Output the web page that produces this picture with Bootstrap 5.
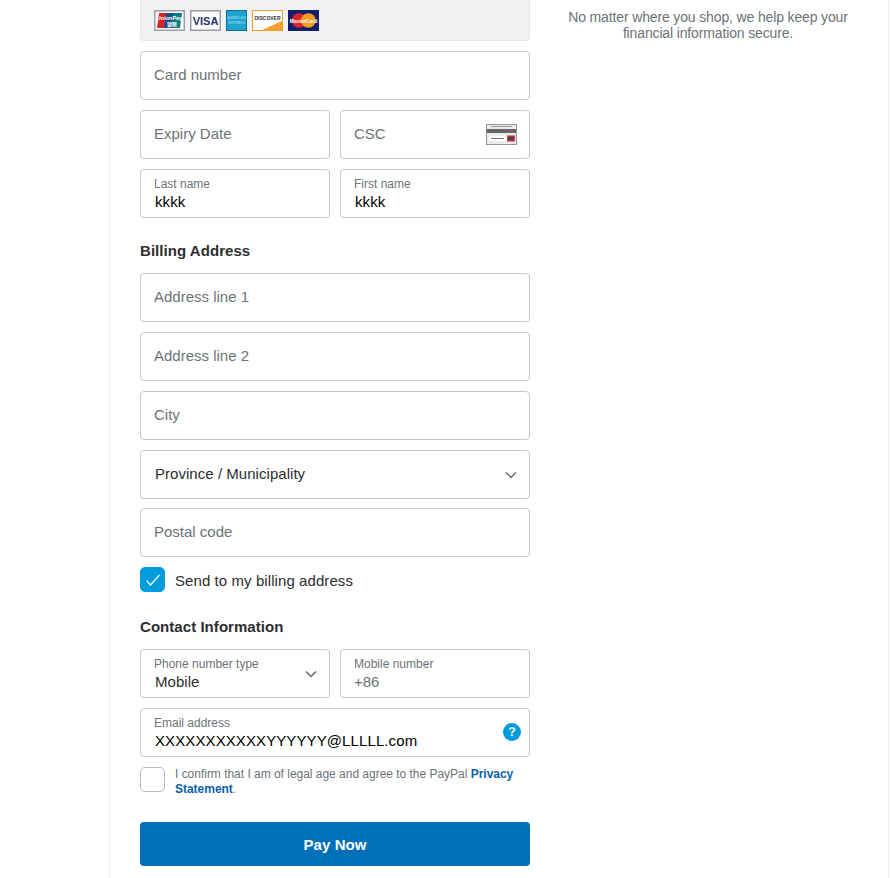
<!DOCTYPE html>
<html lang="en">
<head>
    <meta charset="UTF-8">
    <meta name="viewport" content="width=device-width, initial-scale=1.0">
    <title>Pay with card</title>
    <link href="https://cdn.jsdelivr.net/npm/bootstrap@5.3.0/dist/css/bootstrap.min.css" rel="stylesheet">
    <style>
        html, body {
            height: 878px;
            overflow: hidden;
        }
        body {
            background-color: #fff;
            color: #2c2e2f;
            font-family: "Liberation Sans", Arial, sans-serif;
            font-size: 15px;
        }
        .page-panel {
            width: 780px;
            height: 878px;
            margin-left: 109px;
            border-left: 1px solid #e9ebed;
            border-right: 1px solid #e9ebed;
        }
        .form-col {
            width: 390px;
            margin-left: 30px;
            flex: none;
        }
        .side-col {
            width: 290px;
            margin-left: 33px;
            padding-top: 9px;
            color: #6c7378;
            font-size: 14px;
            line-height: 16px;
            letter-spacing: -.14px;
        }
        .cards-box {
            height: 41px;
            background-color: #f1f2f4;
            border: 1px solid #e4e6e9;
            border-top: 0;
            border-radius: 0 0 4px 4px;
            padding: 10px 0 0 13px;
            margin-bottom: 10px;
            gap: 5px;
        }
        .field-box {
            position: relative;
            height: 49px;
            margin-bottom: 10px;
        }
        .half-w {
            width: 190px;
        }
        .field-box.tight-b {
            margin-bottom: 9px;
        }
        .pay-input.form-control, .pay-input.form-select {
            height: 49px;
            border: 1px solid #c3c8cd;
            border-radius: 4px;
            padding: 0 13px 2px;
            font-size: 15px;
            color: #000;
            box-shadow: none;
        }
        .pay-input::placeholder {
            color: #6c7378;
            opacity: 1;
        }
        .pay-input.form-control.has-label {
            padding: 16px 14px 0;
            letter-spacing: .1px;
        }
        .pay-input.form-control.has-label::placeholder {
            letter-spacing: 0;
        }
        .pay-input.form-control.plus-code {
            padding: 15px 13px 0;
        }
        .pay-input.form-select {
            padding: 0 30px 0 14px;
            color: #2c2e2f;
            letter-spacing: .04px;
            background-image: url("data:image/svg+xml,%3csvg xmlns='http://www.w3.org/2000/svg' viewBox='0 0 12 8'%3e%3cpath fill='none' stroke='%23555' stroke-width='1.2' d='M1 1.5l5 5 5-5'/%3e%3c/svg%3e");
            background-position: right 12px center;
            background-size: 12px 8px;
        }
        .pay-input.form-select.has-label {
            padding-top: 17px;
        }
        .float-text {
            position: absolute;
            left: 14px;
            top: 8px;
            z-index: 1;
            font-size: 12px;
            line-height: 14px;
            color: #6c7378;
            pointer-events: none;
        }
        .csc-icon {
            position: absolute;
            right: 13px;
            top: 14px;
        }
        .help-dot {
            position: absolute;
            right: 9px;
            top: 15px;
            width: 18px;
            height: 18px;
            border-radius: 50%;
            background-color: #009cde;
            color: #fff;
            font-size: 12px;
            font-weight: 700;
            line-height: 18px;
            text-align: center;
        }
        .section-title {
            font-size: 15px;
            font-weight: 700;
            line-height: 18px;
            letter-spacing: .05px;
            color: #2c2e2f;
        }
        .billing-head {
            margin: 14px 0 13px;
        }
        .contact-head {
            margin: 26px 0 13px;
        }
        .tick-box {
            width: 25px;
            height: 25px;
            border: 1px solid #b5bbc0;
            border-radius: 5px;
            background-color: #fff;
            flex: none;
        }
        .tick-box.is-on {
            background-color: #009cde;
            border-color: #009cde;
        }
        .tick-label {
            margin-left: 10px;
            padding-top: 3px;
            line-height: 18px;
            letter-spacing: .08px;
        }
        .legal-text {
            font-size: 12px;
            line-height: 15px;
            color: #6c7378;
            margin-left: 10px;
            letter-spacing: -.02px;
        }
        .legal-text a {
            color: #0c5fa8;
            font-weight: 700;
            text-decoration: none;
        }
        .pay-btn.btn {
            height: 44px;
            margin-top: 25px;
            padding: 8px 0 6px;
            background-color: #0070ba;
            border: 0;
            border-radius: 4px;
            color: #fff;
            font-size: 15px;
            font-weight: 700;
            letter-spacing: .1px;
        }
        .card-logo text {
            font-family: "Liberation Sans", "Noto Sans CJK SC", sans-serif;
            font-weight: 700;
            text-anchor: middle;
        }
    </style>
</head>
<body>
<div class="page-panel d-flex">
    <div class="form-col">
        <div class="cards-box d-flex">
            <!-- card logos -->
            <svg class="card-logo" width="31" height="21" viewBox="0 0 31 21"><rect x=".75" y=".75" width="29.5" height="19.5" fill="#fff" stroke="#9a9ea3" stroke-width="1.5"/><path d="M5 3h8l-2 15H3z" fill="#d8232a"/><path d="M12 3h8l-2 15h-8z" fill="#1a4f8b"/><path d="M19 3h9l-2 15h-8z" fill="#0b7c80"/><text x="15.5" y="9.5" font-size="5.5" fill="#fff">UnionPay</text><text x="18" y="15.5" font-size="5" fill="#fff">银联</text></svg>
            <svg class="card-logo" width="31" height="21" viewBox="0 0 31 21"><rect x=".75" y=".75" width="29.5" height="19.5" fill="#fff" stroke="#9a9ea3" stroke-width="1.5"/><text x="15.5" y="15" font-size="11" fill="#24306e">VISA</text></svg>
            <svg class="card-logo" width="21" height="21" viewBox="0 0 21 21"><rect width="21" height="21" fill="#0e6f8f"/><rect x="1" y="1" width="19" height="19" fill="#1ea3cf"/><text x="10.5" y="9" font-size="3.5" fill="#7fd3ec">AMERICAN</text><text x="10.5" y="14" font-size="3.5" fill="#7fd3ec">EXPRESS</text></svg>
            <svg class="card-logo" width="31" height="21" viewBox="0 0 31 21"><rect x=".5" y=".5" width="30" height="20" fill="#fff" stroke="#f6a02c"/><path d="M10 20 30 11v9z" fill="#f6a02c"/><text x="15.5" y="9.5" font-size="5" fill="#333">DISCOVER</text></svg>
            <svg class="card-logo" width="31" height="21" viewBox="0 0 31 21"><rect width="31" height="21" fill="#141f6b"/><circle cx="11" cy="10.5" r="7.3" fill="#d8232a"/><circle cx="20.4" cy="10.5" r="7.3" fill="#f49d20"/><text x="15.5" y="12.5" font-size="5" fill="#fff">MasterCard</text></svg>
        </div>

        <div class="field-box"><input class="form-control pay-input" placeholder="Card number"></div>
        <div class="d-flex justify-content-between">
            <div class="field-box half-w"><input class="form-control pay-input" placeholder="Expiry Date"></div>
            <div class="field-box half-w"><input class="form-control pay-input" placeholder="CSC">
                <svg class="csc-icon" width="31" height="21" viewBox="0 0 31 21"><rect x=".5" y=".5" width="30" height="20" fill="#ececec" stroke="#8f9498"/><path d="M5 2.5h21" stroke="#999"/><rect x="1" y="5" width="29" height="4" fill="#666"/><rect x="3" y="12" width="23" height="5" fill="#fff"/><path d="M5 14.5h13" stroke="#777"/><rect x="21.5" y="12" width="7" height="5" fill="#444" stroke="#e8394a" stroke-width="1.2"/></svg>
            </div>
        </div>
        <div class="d-flex justify-content-between">
            <div class="field-box half-w"><span class="float-text">Last name</span><input class="form-control pay-input has-label" value="kkkk"></div>
            <div class="field-box half-w"><span class="float-text">First name</span><input class="form-control pay-input has-label" value="kkkk"></div>
        </div>

        <h2 class="section-title billing-head">Billing Address</h2>
        <div class="field-box"><input class="form-control pay-input" placeholder="Address line 1"></div>
        <div class="field-box"><input class="form-control pay-input" placeholder="Address line 2"></div>
        <div class="field-box"><input class="form-control pay-input" placeholder="City"></div>
        <div class="field-box tight-b"><select class="form-select pay-input"><option>Province / Municipality</option></select></div>
        <div class="field-box"><input class="form-control pay-input" placeholder="Postal code"></div>

        <div class="d-flex align-items-center">
            <span class="tick-box is-on d-flex align-items-center justify-content-center">
                <svg width="16" height="14" viewBox="0 0 16 14"><path d="M1.5 7.5 5.5 12 14.5 2" fill="none" stroke="#fff" stroke-width="1.2"/></svg>
            </span>
            <span class="tick-label">Send to my billing address</span>
        </div>

        <h2 class="section-title contact-head">Contact Information</h2>
        <div class="d-flex justify-content-between">
            <div class="field-box half-w"><span class="float-text">Phone number type</span><select class="form-select pay-input has-label"><option>Mobile</option></select></div>
            <div class="field-box half-w"><span class="float-text">Mobile number</span><input class="form-control pay-input has-label plus-code" placeholder="+86"></div>
        </div>
        <div class="field-box"><span class="float-text">Email address</span><input class="form-control pay-input has-label" value="XXXXXXXXXXXYYYYYY@LLLLL.com"><span class="help-dot">?</span></div>

        <div class="d-flex">
            <span class="tick-box"></span>
            <p class="legal-text mb-0">I confirm that I am of legal age and agree to the PayPal <a href="#">Privacy Statement</a>.</p>
        </div>

        <button type="button" class="btn pay-btn w-100">Pay Now</button>
    </div>
    <div class="side-col text-center">No matter where you shop, we help keep your financial information secure.</div>
</div>
<script src="https://cdn.jsdelivr.net/npm/bootstrap@5.3.0/dist/js/bootstrap.bundle.min.js"></script>
</body>
</html>
